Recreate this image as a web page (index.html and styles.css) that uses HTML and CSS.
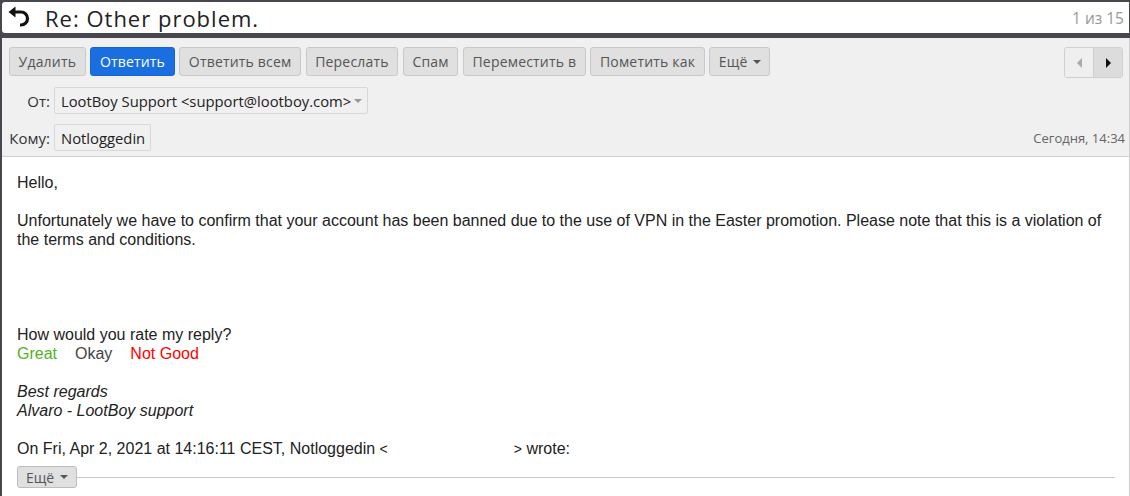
FILE: index.html
```html
<!DOCTYPE html>
<html lang="ru">
<head>
<meta charset="utf-8">
<title>Re: Other problem.</title>
<link rel="stylesheet" href="styles.css">
</head>
<body>
<div class="app">
  <div class="header">
    <svg class="back" width="22" height="22" viewBox="0 0 22 22">
      <path d="M0.5 6 L7.5 0.5 L7.5 11.5 Z" fill="#111"/>
      <path d="M6 6 H13 A6.5 6.5 0 0 1 13 19 H12" fill="none" stroke="#111" stroke-width="3.2"/>
    </svg>
    <div class="title">Re: Other problem.</div>
    <div class="counter">1 из 15</div>
  </div>
  <div class="panel">
    <div class="toolbar">
      <div class="btns">
        <button class="btn">Удалить</button>
        <button class="btn primary">Ответить</button>
        <button class="btn">Ответить всем</button>
        <button class="btn">Переслать</button>
        <button class="btn">Спам</button>
        <button class="btn">Переместить в</button>
        <button class="btn">Пометить как</button>
        <button class="btn">Ещё <span class="caret"></span></button>
      </div>
      <div class="nav">
        <span class="nav-prev"><span class="tri-left"></span></span>
        <span class="nav-next"><span class="tri-right"></span></span>
      </div>
    </div>
    <div class="meta">
      <div class="label">От:</div>
      <div class="field from">LootBoy Support &lt;support@lootboy.com&gt;<span class="caret grey"></span></div>
      <div class="spacer"></div>
      <div class="label">Кому:</div>
      <div class="field">Notloggedin</div>
      <div class="date">Сегодня, 14:34</div>
    </div>
  </div>
  <div class="body">
    <p>Hello,</p>
    <p>&nbsp;</p>
    <p>Unfortunately we have to confirm that your account has been banned due to the use of VPN in the Easter promotion. Please note that this is a violation of the terms and conditions.</p>
    <p>&nbsp;</p>
    <p>&nbsp;</p>
    <p>&nbsp;</p>
    <p>&nbsp;</p>
    <p>How would you rate my reply?</p>
    <p><span class="great">Great</span><span class="okay">Okay</span><span class="bad">Not Good</span></p>
    <p>&nbsp;</p>
    <p class="sig">Best regards</p>
    <p class="sig">Alvaro - LootBoy support</p>
    <p>&nbsp;</p>
    <p>On Fri, Apr 2, 2021 at 14:16:11 CEST, Notloggedin <span class="lt">&lt;</span><span class="hidden-mail"></span><span class="lt">&gt;</span> wrote:</p>
    <div class="quote-row">
      <button class="more">Ещё <span class="caret"></span></button>
      <div class="rule"></div>
    </div>
  </div>
</div>
</body>
</html>
```
FILE: styles.css
```css
html, body {
  margin: 0;
  padding: 0;
  height: 100%;
}
body {
  background: #46474f;
  font-family: "Open Sans", "Liberation Sans", sans-serif;
  overflow: hidden;
}
.app {
  padding: 2px 0 0 2px;
}
.header {
  height: 31px;
  background: #fff;
  border-radius: 3px 0 0 3px;
  display: flex;
  align-items: center;
  padding: 0 5px 0 6px;
  margin-right: 1px;
}
.back {
  display: block;
  margin-top: -1px;
}
.title {
  margin-left: 15px;
  font-size: 22px;
  letter-spacing: 1px;
  color: #222;
  flex: 1;
}
.counter {
  font-size: 15.5px;
  color: #999;
}
.panel {
  margin-top: 5px;
  background: #f0f0f0;
  border-bottom: 1px solid #cfcfcf;
  border-right: 1px solid #cfcfcf;
  padding: 9px 6px 5px 7px;
}
.toolbar {
  display: flex;
  justify-content: space-between;
}
.btns {
  display: flex;
  gap: 4.6px;
}
.btn {
  height: 29px;
  padding: 0 8.6px;
  background: #e0e0e0;
  border: 1px solid #c9c9c9;
  border-radius: 3px;
  font-family: "Open Sans", sans-serif;
  font-size: 14px;
  letter-spacing: 0.18px;
  color: #555;
  display: flex;
  align-items: center;
  gap: 5px;
}
.btn.primary {
  background: #1a6fe0;
  border-color: #1765d0;
  color: #fff;
}
.caret {
  display: inline-block;
  width: 0;
  height: 0;
  border-left: 4px solid transparent;
  border-right: 4px solid transparent;
  border-top: 4px solid #555;
}
.caret.grey {
  border-top-color: #999;
  margin-left: 3px;
}
.nav {
  display: flex;
  height: 29px;
  border: 1px solid #cfcfcf;
  border-radius: 3px;
  overflow: hidden;
}
.nav-prev, .nav-next {
  width: 28px;
  display: flex;
  align-items: center;
  justify-content: center;
}
.nav-prev {
  background: #efefef;
  border-right: 1px solid #cfcfcf;
}
.nav-next {
  background: #dcdcdc;
}
.tri-left {
  border-top: 5px solid transparent;
  border-bottom: 5px solid transparent;
  border-right: 5px solid #aaa;
}
.tri-right {
  border-top: 5px solid transparent;
  border-bottom: 5px solid transparent;
  border-left: 5px solid #111;
}
.meta {
  display: grid;
  grid-template-columns: 41px auto 1fr;
  grid-template-rows: 27px 27px;
  column-gap: 4px;
  row-gap: 10px;
  margin-top: 9px;
  align-items: center;
}
.label {
  text-align: right;
  font-size: 15px;
  color: #333;
  white-space: nowrap;
}
.field {
  justify-self: start;
  height: 27px;
  box-sizing: border-box;
  border: 1px solid #d8d8d8;
  border-radius: 2px;
  background: #f0f0f0;
  padding: 0 5px 0 6px;
  font-size: 14.8px;
  color: #222;
  display: flex;
  align-items: center;
}
.date {
  justify-self: end;
  align-self: center;
  font-size: 13px;
  color: #666;
  margin-right: -2px;
}
.body {
  background: #fff;
  border-right: 1px solid #cfcfcf;
  height: 340px;
  padding: 16px 14px 0 15px;
  font-family: "Liberation Sans", Arial, sans-serif;
  font-size: 16px;
  color: #222;
}
.body p {
  margin: 0;
  line-height: 19px;
}
.great { color: #4fb324; margin-right: 18px; }
.okay { color: #444; margin-right: 18px; }
.bad { color: #f00; }
.sig { font-style: italic; }
.lt { font-size: 14px; }
.hidden-mail {
  display: inline-block;
  width: 126px;
}
.quote-row {
  display: flex;
  align-items: center;
  margin-top: 7px;
}
.more {
  height: 22px;
  padding: 0 8px;
  background: #e0e0e0;
  border: 1px solid #bdbdbd;
  border-radius: 3px;
  font-family: "Open Sans", sans-serif;
  font-size: 14px;
  color: #555;
  display: flex;
  align-items: center;
  gap: 6px;
}
.rule {
  flex: 1;
  height: 1px;
  background: #c8c8c8;
}
```
